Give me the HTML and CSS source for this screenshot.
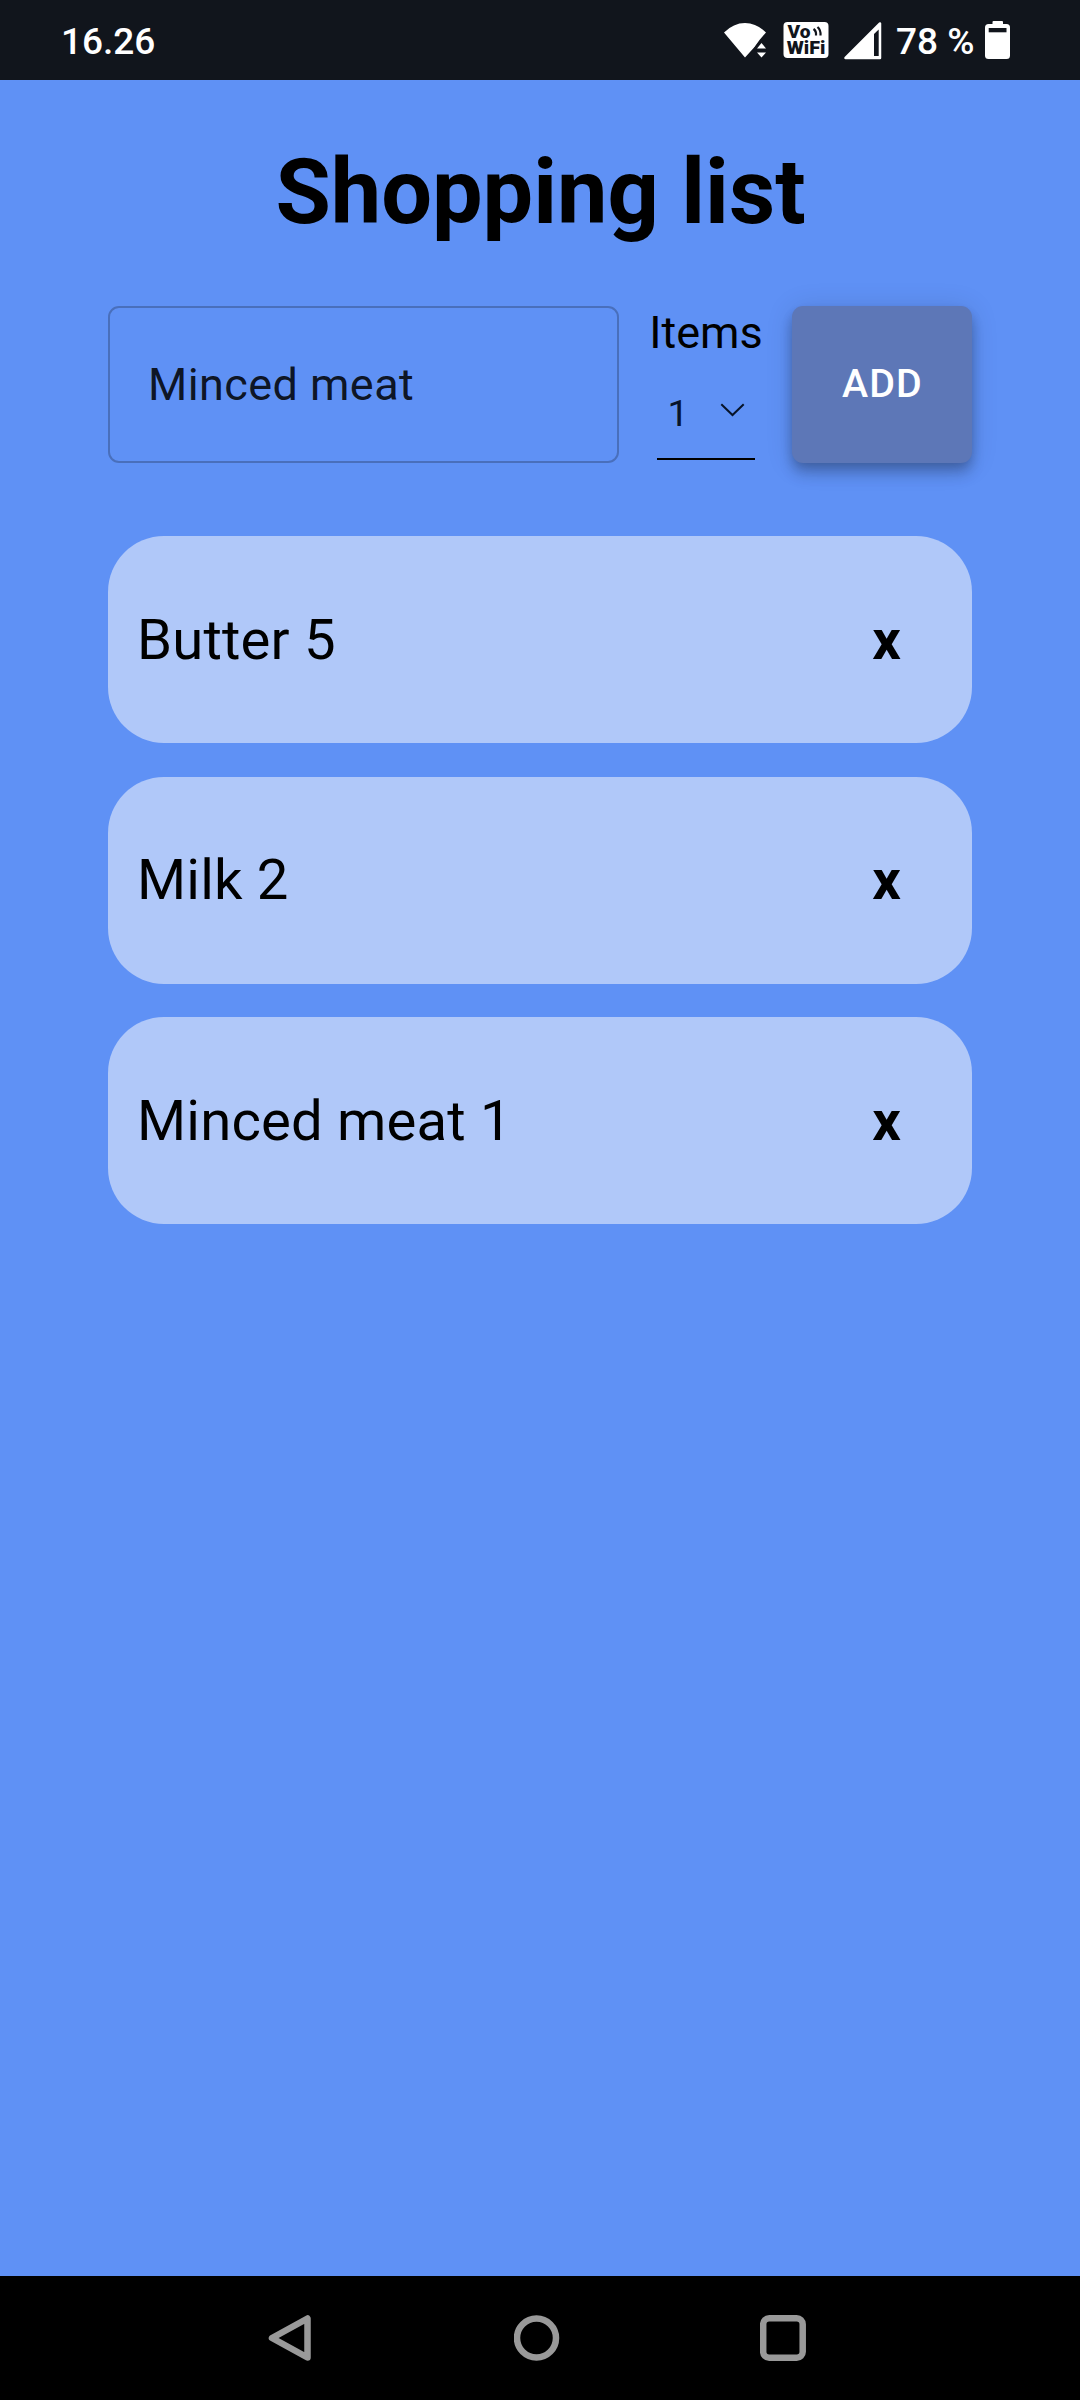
FILE: index.html
```html
<!DOCTYPE html>
<html lang="en">
<head>
<meta charset="utf-8">
<title>Shopping list</title>
<link rel="stylesheet" href="styles.css">
</head>
<body>
<header class="status-bar">
  <span class="clock">16.26</span>
  <div class="status-icons">
    <svg class="wifi" width="44" height="40" viewBox="0 0 44 40" fill="#fff">
      <path d="M0 12.500Q9.500 3 21 3T42 12.500L35.500 20L30.500 27L21 37.500Z"/>
      <path d="M30.500 30V27.500L37.500 19L44 27V39H30.500Z" fill="#11151c"/>
      <path d="M33 28.500L37.500 23L42 28.500ZM33 32.500H42L37.500 37.500Z"/>
    </svg>
    <svg class="vowifi" width="46" height="40" viewBox="0 0 46 40">
      <rect x=".5" y="2" width="45" height="36" rx="4" fill="#fff"/>
      <text class="vo-text" x="4.500" y="18.200" textLength="23" lengthAdjust="spacingAndGlyphs">Vo</text>
      <text class="vo-text" x="3.800" y="34.200" textLength="38.500" lengthAdjust="spacingAndGlyphs">WiFi</text>
      <g fill="none" stroke="#11151c" stroke-width="2.200"><path d="M30.500 9Q33.500 11 33 15.500"/><path d="M34.500 7Q38 10 37.500 15.500"/></g>
    </svg>
    <svg class="signal" width="38" height="40" viewBox="0 0 38 40">
      <path d="M1.500 38L36 3.500V38Z" fill="#fff" stroke="#fff" stroke-width="2.500" stroke-linejoin="round"/>
      <path d="M30 14L34.700 9.500V36H30Z" fill="#11151c"/>
    </svg>
    <span class="percent">78 %</span>
    <svg class="battery" width="25" height="40" viewBox="0 0 25 40" fill="#fff">
      <rect x="7.500" y="1" width="10.500" height="8" rx="1"/>
      <rect y="4" width="25" height="35" rx="3.500"/>
      <rect x="3.700" y="8" width="17.800" height="4.300" fill="#11151c"/>
    </svg>
  </div>
</header>
<main class="page">
  <h1 class="title">Shopping list</h1>
  <form class="add-form">
    <input class="item-input" type="text" value="Minced meat" aria-label="Item">
    <div class="quantity">
      <span class="quantity-label">Items</span>
      <div class="quantity-select">
        <span>1</span>
        <svg width="25" height="14" viewBox="0 0 25 14" fill="none" stroke="#07142a" stroke-width="2"><path d="M1.300 1.200L12.500 12L23.700 1.200"/></svg>
      </div>
    </div>
    <button class="add-button" type="button">ADD</button>
  </form>
  <ul class="list">
    <li class="item"><span>Butter 5</span><b class="remove">x</b></li>
    <li class="item"><span>Milk 2</span><b class="remove">x</b></li>
    <li class="item"><span>Minced meat 1</span><b class="remove">x</b></li>
  </ul>
</main>
<nav class="nav-bar">
  <svg width="46" height="48" viewBox="0 0 46 48"><path d="M40.500 4.500V43.500L5 24Z"/></svg>
  <svg width="46" height="48" viewBox="0 0 46 48"><circle cx="22.500" cy="24" r="19.500"/></svg>
  <svg width="46" height="48" viewBox="0 0 46 48"><rect x="3.200" y="4.200" width="39.500" height="39.500" rx="6"/></svg>
</nav>
</body>
</html>
```
FILE: styles.css
```css
* {
  box-sizing: border-box;
}

body {
  margin: 0;
  height: 2400px;
  display: flex;
  flex-direction: column;
  background: #5f91f5;
  color: #000;
  font-family: Roboto, sans-serif;
}

.status-bar {
  height: 80px;
  flex: none;
  display: flex;
  align-items: center;
  justify-content: space-between;
  padding: 0 70px 0 61px;
  background: #11151c;
  color: #fff;
  font-size: 37px;
  font-weight: 500;
  line-height: 44px;
}

.clock,
.percent {
  padding-top: 4px;
}

.status-icons {
  display: flex;
  align-items: center;
}

.vowifi {
  margin-left: 15px;
}

.signal {
  margin-left: 15px;
}

.percent {
  width: 78px;
  margin: 0 11px 0 14px;
  white-space: nowrap;
}

.vo-text {
  fill: #11151c;
  font-size: 17.5px;
  font-weight: 900;
}

.page {
  flex: 1;
  padding: 60px 108px 0;
}

.title {
  margin: 0;
  padding-left: 1px;
  height: 166px;
  font-size: 90px;
  font-weight: 700;
  line-height: 105px;
  text-align: center;
}

.add-form {
  display: flex;
  height: 157px;
}

.item-input {
  width: 511px;
  padding: 0 38px;
  border: 2px solid rgba(0, 0, 0, 0.23);
  border-radius: 11px;
  background: none;
  color: rgba(0, 0, 0, 0.87);
  font: 400 45px Roboto, sans-serif;
  letter-spacing: 0.42px;
}

.quantity {
  width: 173px;
  display: flex;
  flex-direction: column;
  align-items: center;
}

.quantity-label {
  padding-left: 1px;
  font-size: 45px;
  line-height: 53px;
}

.quantity-select {
  width: 98px;
  height: 101px;
  display: flex;
  align-items: center;
  justify-content: space-between;
  padding: 8px 10px 0 11px;
  border-bottom: 2px solid #000;
  color: #07142a;
  font-size: 37.5px;
}

.quantity-select svg {
  margin-bottom: 5px;
}

.add-button {
  width: 180px;
  border: 0;
  border-radius: 11px;
  background: #5d77b7;
  color: #fff;
  font: 500 39.4px Roboto, sans-serif;
  letter-spacing: 1.12px;
  padding: 0 0 3px 1px;
  box-shadow: 0 5.6px 11.2px -2.8px rgba(0, 0, 0, 0.2), 0 11.2px 14px 0 rgba(0, 0, 0, 0.14), 0 2.8px 28px 0 rgba(0, 0, 0, 0.12);
}

.list {
  display: flex;
  flex-direction: column;
  gap: 33.5px;
  margin: 73px 0 0;
  padding: 0;
  list-style: none;
}

.item {
  height: 207px;
  display: flex;
  align-items: center;
  justify-content: space-between;
  padding: 0 71px 0 29px;
  border-radius: 56px;
  background: #b0c8f9;
  font-size: 56.25px;
  letter-spacing: 0.18px;
}

.remove {
  font-weight: 700;
}

.nav-bar {
  height: 124px;
  flex: none;
  display: flex;
  gap: 200.500px;
  padding: 38px 0 0 267px;
  background: #000;
}

.nav-bar svg {
  fill: none;
  stroke: #999;
  stroke-width: 6.5;
  stroke-linejoin: round;
}
```
